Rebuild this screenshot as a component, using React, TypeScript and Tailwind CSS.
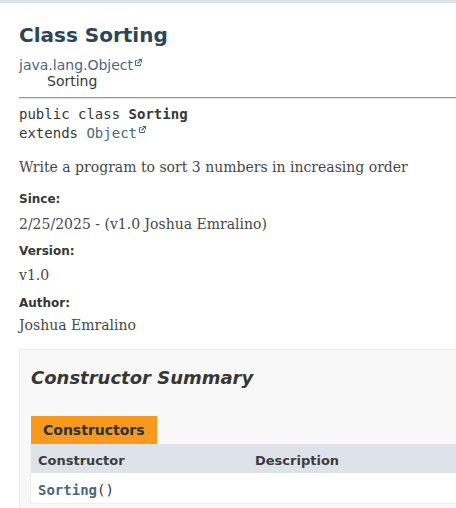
/**
 * App — Javadoc class page for Sorting
 */

const sans = "font-['DejaVu_Sans',Arial,sans-serif]";
const serif = "font-['DejaVu_Serif',Georgia,serif]";
const mono = "font-['DejaVu_Sans_Mono',monospace]";

function ExtLink() {
  return (
    <svg width="8" height="8" viewBox="0 0 8 8" className="inline-block align-top ml-[1px] mt-[2px]">
      <path d="M3.5 1.5H1.5v5h5V4.5" fill="none" stroke="#4a6782" strokeWidth="1" />
      <path d="M4.5 0.5h3v3M7.5 0.5L3.5 4.5" fill="none" stroke="#4a6782" strokeWidth="1.1" />
    </svg>
  );
}

function Tag({ label, value, labelGap, valueGap }: { label: string; value: string; labelGap: string; valueGap: string }) {
  return (
    <>
      <div className={`${sans} text-[12px] leading-[16px] font-bold text-[#353833] ${labelGap}`}>{label}</div>
      <div className={`${serif} text-[14px] leading-[20px] text-[#474747] ${valueGap}`}>{value}</div>
    </>
  );
}

export default function App() {
  return (
    <div className={`w-[456px] h-[508px] overflow-hidden bg-white ${sans} text-[#353833]`}>
      <div className="h-[3px] bg-[#dee3e9]" />

      <main className="w-[600px] pl-[19px]">
        {/* Header */}
        <h1 className="mt-[20px] text-[20px] leading-[24px] font-bold text-[#2c4557]">Class Sorting</h1>

        <div className="mt-[10px] text-[14px] leading-[16px]">
          <a className="text-[#4a6782]">java.lang.Object</a>
          <ExtLink />
          <div className="ml-[28px]">Sorting</div>
        </div>

        <div className="mt-[8px] h-[2px] border-t border-t-[#9a9a9a] border-b border-b-[#e0e0e0]" />

        {/* Signature */}
        <div className={`${mono} mt-[6px] text-[14px] leading-[19px]`}>
          <div>
            public class <span className="font-bold">Sorting</span>
          </div>
          <div>
            extends <a className="text-[#4a6782]">Object</a>
            <ExtLink />
          </div>
        </div>

        <div className={`${serif} mt-[14px] text-[14px] leading-[20px] text-[#474747]`}>
          Write a program to sort 3 numbers in increasing order
        </div>

        <Tag label="Since:" value="2/25/2025 - (v1.0 Joshua Emralino)" labelGap="mt-[14px]" valueGap="mt-[7px]" />
        <Tag label="Version:" value="v1.0" labelGap="mt-[9px]" valueGap="mt-[6px]" />
        <div className="text-[12px] leading-[16px] font-bold mt-[10px]">Author:</div>
        <div className={`${serif} text-[14px] leading-[20px] text-[#474747] mt-[4px]`}>Joshua Emralino</div>

        {/* Constructor summary */}
        <section className="mt-[14px] border border-[#ededed] bg-[#f8f8f8] pl-[10px] pt-[16px] pb-[10px]">
          <h2 className="pl-[1px] text-[18px] leading-[24px] font-bold italic text-[#353833]">Constructor Summary</h2>

          <div className="mt-[26px]">
            <div className="ml-[1px] inline-block bg-[#f8981d] px-[12px] pt-[6px] pb-[6px] text-[14px] leading-[16px] font-bold text-[#253441]">
              Constructors
            </div>
            <div className="border border-t-0 border-[#eeeeee] bg-white">
              <div className="grid grid-cols-[217px_1fr] bg-[#dee3e9] h-[29px] text-[13px] leading-[15px] font-bold text-[#3d3d3d]">
                <div className="pl-[7px] pt-[9px]">Constructor</div>
                <div className="pl-[7px] pt-[9px]">Description</div>
              </div>
              <div className="grid grid-cols-[217px_1fr] h-[30px]">
                <div className={`${mono} pl-[7px] pt-[9px] text-[14px] leading-[16px]`}>
                  <a className="font-bold text-[#4a6782]">Sorting</a>()
                </div>
                <div />
              </div>
            </div>
          </div>
        </section>
      </main>
    </div>
  );
}
